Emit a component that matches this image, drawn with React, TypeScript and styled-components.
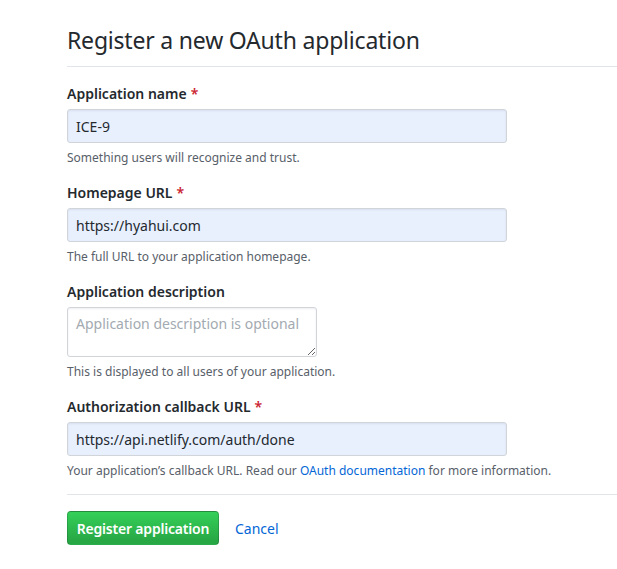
import React from "react";
import styled, { createGlobalStyle } from "styled-components";

const Global = createGlobalStyle`
  html, body { margin: 0; padding: 0; background: #fff; }
  body {
    font-family: "Noto Sans", "Liberation Sans", sans-serif;
    color: #24292e;
    font-size: 14px;
    line-height: 1.5;
  }
  * { box-sizing: border-box; }
`;

const Page = styled.div`
  padding: 22px 0 0 67px;
`;

const Header = styled.div`
  padding-bottom: 8px;
  border-bottom: 1px solid #e1e4e8;
  margin-bottom: 16px;
`;

const Title = styled.h2`
  margin: 0;
  font-size: 23px;
  line-height: 36px;
  font-weight: 400;
  color: #24292e;
  letter-spacing: -0.2px;
`;

const Group = styled.div`
  margin-bottom: 15px;
  display: flex;
  flex-direction: column;
  align-items: flex-start;
`;

const Label = styled.label`
  font-weight: 600;
  font-size: 14px;
  line-height: 21px;
  margin-bottom: 5px;
`;

const Req = styled.span`
  color: #cb2431;
  margin-left: 4px;
`;

const Input = styled.input`
  width: 440px;
  height: 34px;
  padding: 6px 8px;
  font: inherit;
  font-size: 14px;
  color: #24292e;
  background: #e8f0fe;
  border: 1px solid #d1d5da;
  border-radius: 3px;
  box-shadow: inset 0 1px 2px rgba(27, 31, 35, 0.075);
  outline: none;
`;

const TextArea = styled.textarea`
  width: 250px;
  height: 50px;
  padding: 6px 8px;
  font: inherit;
  font-size: 14px;
  line-height: 20px;
  background: #fff;
  border: 1px solid #d1d5da;
  border-radius: 3px;
  box-shadow: inset 0 1px 2px rgba(27, 31, 35, 0.075);
  outline: none;
  &::placeholder { color: #a3aab1; }
`;

const Note = styled.p`
  margin: 6px 0 0;
  font-size: 12px;
  line-height: 18px;
  color: #586069;
`;

const Link = styled.a`
  color: #0366d6;
  text-decoration: none;
`;

const Footer = styled.div`
  margin-top: -1px;
  border-top: 1px solid #e1e4e8;
  padding-top: 16px;
  display: flex;
  align-items: center;
  gap: 16px;
`;

const PrimaryButton = styled.button`
  width: 152px;
  height: 34px;
  font: inherit;
  font-size: 14px;
  font-weight: 600;
  letter-spacing: -0.2px;
  color: #fff;
  background-image: linear-gradient(-180deg, #34d058 0%, #28a745 90%);
  border: 1px solid rgba(27, 31, 35, 0.2);
  border-radius: 4px;
  cursor: pointer;
`;

const CancelLink = styled.a`
  color: #0366d6;
  font-size: 14px;
  text-decoration: none;
`;

export default function App() {
  return (
    <>
      <Global />
      <Page>
        <Header>
          <Title>Register a new OAuth application</Title>
        </Header>
        <Group>
          <Label>
            Application name<Req>*</Req>
          </Label>
          <Input defaultValue="ICE-9" />
          <Note>Something users will recognize and trust.</Note>
        </Group>
        <Group>
          <Label>
            Homepage URL<Req>*</Req>
          </Label>
          <Input defaultValue="https://hyahui.com" />
          <Note>The full URL to your application homepage.</Note>
        </Group>
        <Group>
          <Label>Application description</Label>
          <TextArea placeholder="Application description is optional" />
          <Note>This is displayed to all users of your application.</Note>
        </Group>
        <Group>
          <Label>
            Authorization callback URL<Req>*</Req>
          </Label>
          <Input defaultValue="https://api.netlify.com/auth/done" />
          <Note>
            Your application’s callback URL. Read our{" "}
            <Link href="#">OAuth documentation</Link> for more information.
          </Note>
        </Group>
        <Footer>
          <PrimaryButton>Register application</PrimaryButton>
          <CancelLink href="#">Cancel</CancelLink>
        </Footer>
      </Page>
    </>
  );
}
